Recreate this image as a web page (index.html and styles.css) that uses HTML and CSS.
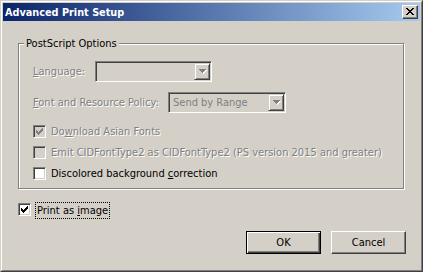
FILE: index.html
```html
<!DOCTYPE html>
<html lang="en">
<head>
  <meta charset="UTF-8" />
  <title>Advanced Print Setup</title>
  <link rel="stylesheet" href="styles.css">
</head>
<body>
  <div class="window">
    <div class="frame">
      <div class="titlebar">
        <span class="title">Advanced Print Setup</span>
        <button type="button" class="close-btn" aria-label="Close">
          <svg width="8" height="7" viewBox="0 0 8 7" shape-rendering="crispEdges">
            <path d="M0 0h2v1h-2z M6 0h2v1h-2z M1 1h2v1h-2z M5 1h2v1h-2z M2 2h4v1h-4z M3 3h2v1h-2z M2 4h4v1h-4z M1 5h2v1h-2z M5 5h2v1h-2z M0 6h2v1h-2z M6 6h2v1h-2z" fill="#000"/>
          </svg>
        </button>
      </div>

      <div class="content">
        <fieldset class="group">
          <legend>PostScript Options</legend>
          <div class="group-body">
            <div class="field-row">
              <span class="label disabled lang-label"><u>L</u>anguage:</span>
              <div class="combo lang-combo">
                <span class="combo-value"></span>
                <span class="combo-btn">
                  <svg width="8" height="5" viewBox="0 0 8 5" shape-rendering="crispEdges">
                    <path d="M1 1h7v1h-7z M2 2h5v1h-5z M3 3h3v1h-3z M4 4h1v1h-1z" fill="#fff"/>
                    <path d="M0 0h7v1h-7z M1 1h5v1h-5z M2 2h3v1h-3z M3 3h1v1h-1z" fill="#808080"/>
                  </svg>
                </span>
              </div>
            </div>
            <div class="field-row policy-row">
              <span class="label disabled policy-label"><u>F</u>ont and Resource Policy:</span>
              <div class="combo policy-combo">
                <span class="combo-value">Send by Range</span>
                <span class="combo-btn">
                  <svg width="8" height="5" viewBox="0 0 8 5" shape-rendering="crispEdges">
                    <path d="M1 1h7v1h-7z M2 2h5v1h-5z M3 3h3v1h-3z M4 4h1v1h-1z" fill="#fff"/>
                    <path d="M0 0h7v1h-7z M1 1h5v1h-5z M2 2h3v1h-3z M3 3h1v1h-1z" fill="#808080"/>
                  </svg>
                </span>
              </div>
            </div>

            <div class="check-row first">
              <span class="checkbox disabled-box">
                <svg width="7" height="7" viewBox="0 0 7 7" shape-rendering="crispEdges">
                  <path d="M0 2h1v3h-1z M1 3h1v3h-1z M2 4h1v3h-1z M3 3h1v3h-1z M4 2h1v3h-1z M5 1h1v3h-1z M6 0h1v3h-1z" fill="#808080"/>
                </svg>
              </span>
              <span class="label disabled">Do<u>w</u>nload Asian Fonts</span>
            </div>
            <div class="check-row">
              <span class="checkbox disabled-box"></span>
              <span class="label disabled">Emit CIDFontType2 as CIDFontType2 (PS version 2015 and greater)</span>
            </div>
            <div class="check-row">
              <span class="checkbox"></span>
              <span class="label">Discolored background <u>c</u>orrection</span>
            </div>
          </div>
        </fieldset>

        <div class="print-row">
          <span class="checkbox">
            <svg width="7" height="7" viewBox="0 0 7 7" shape-rendering="crispEdges">
              <path d="M0 2h1v3h-1z M1 3h1v3h-1z M2 4h1v3h-1z M3 3h1v3h-1z M4 2h1v3h-1z M5 1h1v3h-1z M6 0h1v3h-1z" fill="#000"/>
            </svg>
          </span>
          <span class="label focus">Print as <u>i</u>mage</span>
        </div>

        <div class="buttons">
          <button type="button" class="btn default">OK</button>
          <button type="button" class="btn">Cancel</button>
        </div>
      </div>
    </div>
  </div>
</body>
</html>
```

FILE: styles.css
```css
body {
  margin: 0;
  background-color: #d4d0c8;
  font-family: "DejaVu Sans", "Liberation Sans", sans-serif;
  font-stretch: condensed;
  font-size: 11px;
  color: #000;
}

.window {
  width: 423px;
  height: 272px;
  box-sizing: border-box;
  border: 1px solid;
  border-color: #d4d0c8 #404040 #404040 #d4d0c8;
  background-color: #d4d0c8;
}
.frame {
  height: 100%;
  box-sizing: border-box;
  border: 1px solid;
  border-color: #fff #808080 #808080 #fff;
  padding: 1px;
}

/* Title bar */
.titlebar {
  height: 18px;
  display: flex;
  align-items: center;
  justify-content: space-between;
  padding: 0 2px 0 2px;
  background: linear-gradient(to right, #0a246a, #a6caf0);
}
.title {
  color: #fff;
  font-weight: bold;
  font-size: 10.8px;
}
.close-btn {
  width: 16px;
  height: 14px;
  padding: 0;
  margin: 0;
  display: flex;
  align-items: center;
  justify-content: center;
  background-color: #d4d0c8;
  border: 1px solid;
  border-color: #fff #404040 #404040 #fff;
  box-shadow: inset -1px -1px 0 #808080;
}
.close-btn svg {
  display: block;
  margin: 0 1px 1px 0;
}

.content {
  padding: 16px 14px 0 15px;
}

/* Group box */
.group {
  width: 386px;
  box-sizing: border-box;
  min-width: 0;
  margin: 0;
  padding: 0 0 4px 5px;
  border: 1px solid #808080;
  box-shadow: inset 1px 1px 0 #fff, 1px 1px 0 #fff;
}
.group legend {
  padding: 0 2px;
  line-height: 13px;
  height: 13px;
  background-color: #d4d0c8;
}
.group-body {
  padding: 11px 0 0 9px;
}

.label {
  white-space: nowrap;
}
.label.disabled {
  color: #808080;
  text-shadow: 1px 1px 0 #fff;
}
.label u {
  text-decoration-thickness: 1px;
  text-underline-offset: 1px;
}

.field-row {
  display: flex;
  align-items: center;
  height: 21px;
}
.policy-row {
  margin-top: 10px;
}
.lang-label {
  width: 62px;
}
.policy-label {
  width: 135px;
}

/* Combo boxes */
.combo {
  height: 21px;
  box-sizing: border-box;
  display: flex;
  border: 1px solid;
  border-color: #808080 #fff #fff #808080;
  box-shadow: inset 1px 1px 0 #404040, inset -1px -1px 0 #d4d0c8;
  padding: 1px;
  background-color: #d4d0c8;
}
.lang-combo {
  width: 117px;
}
.policy-combo {
  width: 118px;
}
.combo-value {
  flex: 1;
  padding-left: 3px;
  line-height: 17px;
  color: #808080;
}
.combo-btn {
  width: 16px;
  height: 17px;
  box-sizing: border-box;
  display: flex;
  align-items: center;
  justify-content: center;
  border: 1px solid;
  border-color: #d4d0c8 #404040 #404040 #d4d0c8;
  box-shadow: inset 1px 1px 0 #fff, inset -1px -1px 0 #808080;
}
.combo-btn svg {
  display: block;
  margin-left: 1px;
}

/* Check boxes */
.check-row {
  display: flex;
  align-items: center;
  gap: 5px;
  height: 21px;
}
.check-row.first {
  margin-top: 8px;
}
.checkbox {
  width: 13px;
  height: 13px;
  box-sizing: border-box;
  flex: none;
  display: flex;
  align-items: center;
  justify-content: center;
  border: 1px solid;
  border-color: #808080 #fff #fff #808080;
  box-shadow: inset 1px 1px 0 #404040, inset -1px -1px 0 #d4d0c8;
  background-color: #fff;
}
.checkbox svg {
  display: block;
}
.checkbox.disabled-box {
  background-color: #d4d0c8;
}

.print-row {
  display: flex;
  align-items: flex-start;
  gap: 4px;
  margin-top: 13px;
  height: 17px;
}
.print-row .checkbox {
  margin-top: 1px;
}
.label.focus {
  height: 17px;
  box-sizing: border-box;
  line-height: 15px;
  padding: 0 1px;
  border: 1px dotted #000;
}

/* Buttons */
.buttons {
  display: flex;
  justify-content: flex-end;
  gap: 10px;
  margin-top: 12px;
}
.btn {
  width: 75px;
  height: 23px;
  margin: 0;
  padding: 0;
  font: inherit;
  color: #000;
  background-color: #d4d0c8;
  border: 1px solid;
  border-color: #fff #404040 #404040 #fff;
  box-shadow: inset -1px -1px 0 #808080;
}
.btn.default {
  border-color: #000;
  box-shadow: inset 1px 1px 0 #fff, inset -1px -1px 0 #404040, inset -2px -2px 0 #808080;
}
```
